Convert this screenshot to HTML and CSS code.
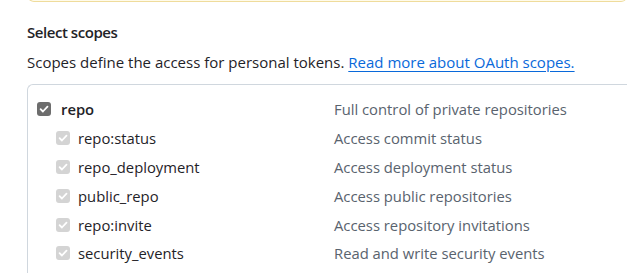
FILE: index.html
```html
<!DOCTYPE html>
<html lang="en">
<head>
    <meta charset="UTF-8">
    <title>Select scopes</title>
    <link rel="stylesheet" href="styles.css">
</head>
<body>
    <div class="flash-warn"></div>

    <div class="scopes">
        <h3 class="scopes-title">Select scopes</h3>
        <p class="scopes-note">Scopes define the access for personal tokens. <a href="#">Read more about OAuth scopes.</a></p>

        <div class="scope-panel">
            <div class="scope-row parent">
                <label class="scope-name"><span class="check checked"><svg viewBox="0 0 12 12"><path d="M2.6 6.2l2.3 2.3 4.6-4.8"/></svg></span>repo</label>
                <span class="scope-desc">Full control of private repositories</span>
            </div>
            <div class="scope-row child">
                <label class="scope-name"><span class="check disabled"><svg viewBox="0 0 12 12"><path d="M2.6 6.2l2.3 2.3 4.6-4.8"/></svg></span>repo:status</label>
                <span class="scope-desc">Access commit status</span>
            </div>
            <div class="scope-row child">
                <label class="scope-name"><span class="check disabled"><svg viewBox="0 0 12 12"><path d="M2.6 6.2l2.3 2.3 4.6-4.8"/></svg></span>repo_deployment</label>
                <span class="scope-desc">Access deployment status</span>
            </div>
            <div class="scope-row child">
                <label class="scope-name"><span class="check disabled"><svg viewBox="0 0 12 12"><path d="M2.6 6.2l2.3 2.3 4.6-4.8"/></svg></span>public_repo</label>
                <span class="scope-desc">Access public repositories</span>
            </div>
            <div class="scope-row child">
                <label class="scope-name"><span class="check disabled"><svg viewBox="0 0 12 12"><path d="M2.6 6.2l2.3 2.3 4.6-4.8"/></svg></span>repo:invite</label>
                <span class="scope-desc">Access repository invitations</span>
            </div>
            <div class="scope-row child">
                <label class="scope-name"><span class="check disabled"><svg viewBox="0 0 12 12"><path d="M2.6 6.2l2.3 2.3 4.6-4.8"/></svg></span>security_events</label>
                <span class="scope-desc">Read and write security events</span>
            </div>
        </div>
    </div>
</body>
</html>
```

FILE: styles.css
```css
* {
    margin: 0;
    padding: 0;
    box-sizing: border-box;
}

body {
    font-family: 'Open Sans', 'Noto Sans', sans-serif;
    font-size: 15px;
    color: #1f2328;
    background: #ffffff;
    overflow: hidden;
}

.flash-warn {
    margin: -10px 0 0 28px;
    height: 12px;
    background: #fffbea;
    border: 1px solid #efdc9c;
    border-top: none;
    border-right: none;
    border-radius: 0 0 6px 6px;
}

.scopes {
    padding: 20px 0 0 27px;
}

.scopes-title {
    font-size: 15px;
    font-weight: 600;
    letter-spacing: -0.45px;
    line-height: 20px;
    margin-bottom: 10px;
}

.scopes-note {
    line-height: 20px;
    margin-bottom: 12px;
    white-space: nowrap;
}

.scopes-note a {
    color: #0969da;
    text-decoration: underline;
    text-underline-offset: 3px;
}

.scope-panel {
    width: 600px;
    border: 1px solid #d0d7de;
    border-right: none;
    border-radius: 6px 0 0 0;
    padding: 10px 0 0 9px;
    height: 200px;
}

.scope-row {
    display: grid;
    grid-template-columns: 297px 1fr;
    height: 28.8px;
    align-items: center;
    font-size: 14.8px;
    white-space: nowrap;
}

.scope-name {
    display: flex;
    align-items: center;
    gap: 10px;
}

.parent .scope-name {
    font-weight: 600;
}

.child .scope-name {
    padding-left: 19px;
    gap: 8px;
}

.scope-desc {
    color: #59636e;
}

.check {
    width: 14px;
    height: 14px;
    border-radius: 3px;
    display: flex;
    align-items: center;
    justify-content: center;
}

.check svg {
    width: 12px;
    height: 12px;
    fill: none;
    stroke: #ffffff;
    stroke-width: 1.8;
    stroke-linecap: round;
    stroke-linejoin: round;
}

.check.checked {
    background: #6d6d6d;
}

.check.disabled {
    background: #d4d4d4;
}
```
